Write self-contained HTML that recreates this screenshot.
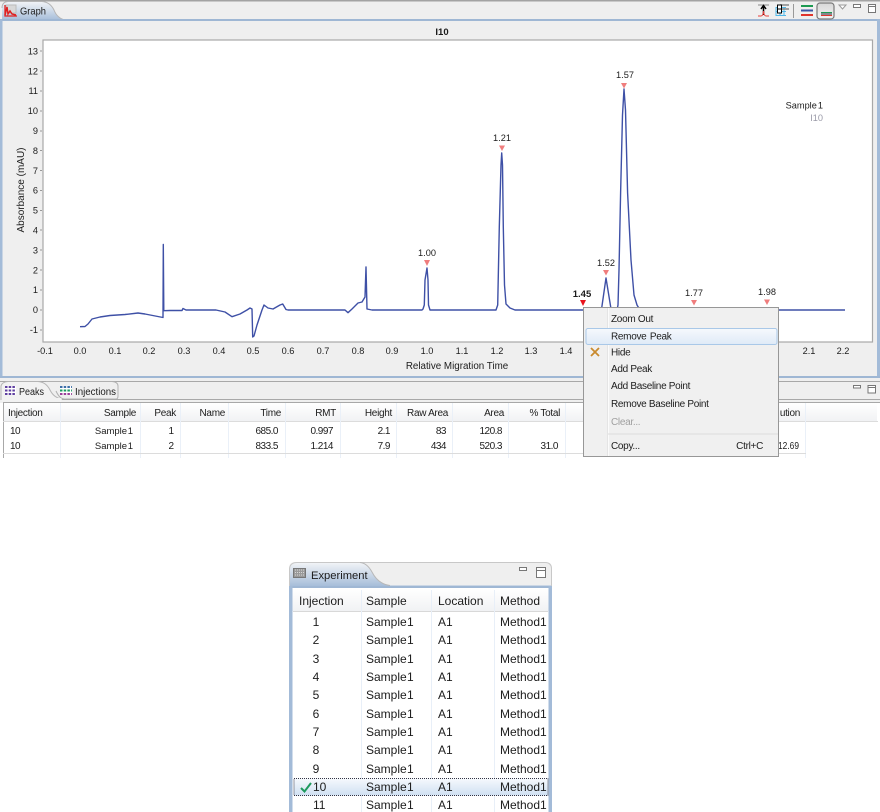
<!DOCTYPE html>
<html><head><meta charset="utf-8"><style>
html,body{margin:0;padding:0;background:#fff;width:880px;height:812px;overflow:hidden}
svg{display:block}
text{font-family:"Liberation Sans",sans-serif;font-size:10px;fill:#1c1c1c}
.e{text-anchor:end}.m{text-anchor:middle}
.t text{font-size:12px}
.p text{font-size:9.200px}
.n{letter-spacing:-.5px}
.s{font-size:9.500px;word-spacing:-2px}
.u text{letter-spacing:-.3px}
.t .w{word-spacing:-3px}
</style></head><body>
<svg width="880" height="812" viewBox="0 0 880 812" xmlns="http://www.w3.org/2000/svg">
<defs>
<linearGradient id="tab" x1="0" y1="0" x2="0" y2="1"><stop offset="0" stop-color="#f2f4f7"/><stop offset="1" stop-color="#a3bbd8"/></linearGradient>
<linearGradient id="hd" x1="0" y1="0" x2="0" y2="1"><stop offset="0" stop-color="#fff"/><stop offset="1" stop-color="#f1f2f4"/></linearGradient>
<linearGradient id="sel" x1="0" y1="0" x2="0" y2="1"><stop offset="0" stop-color="#f6f9fd"/><stop offset="1" stop-color="#cfe0f2"/></linearGradient>
<linearGradient id="hl" x1="0" y1="0" x2="0" y2="1"><stop offset="0" stop-color="#f6f9fd"/><stop offset="1" stop-color="#dfeaf7"/></linearGradient>
<linearGradient id="btn" x1="0" y1="0" x2="0" y2="1"><stop offset="0" stop-color="#d8d8d8"/><stop offset="1" stop-color="#f3f3f3"/></linearGradient>
</defs>

<!-- Graph panel -->
<rect x="0" y="0" width="880" height="378" fill="#efefef"/>
<rect x="0" y="0" width="880" height="1.500" fill="#a3a3a3"/>
<path d="M2 21V6Q2 2 8 1.500H42Q50 2 54 10Q57 18 65 20V21Z" fill="url(#tab)"/>
<path d="M2 8Q2 2 8 1.500H42Q50 2 54 10Q57 18 65 20" fill="none" stroke="#b5b5b5"/>
<rect x="0" y="19" width="880" height="2" fill="#9fb7d4"/>
<rect x="0" y="19" width="2.500" height="359" fill="#a3bbd8"/>
<rect x="877" y="19" width="3" height="359" fill="#a3bbd8"/>
<rect x="0" y="376" width="880" height="2" fill="#9fb7d4"/>
<text x="20" y="14.500" style="font-size:10.500px" textLength="26" lengthAdjust="spacingAndGlyphs">Graph</text>
<g fill="none">
<rect x="6" y="5" width="10" height="8" fill="#d8d8d8" stroke="#bbb"/>
<path d="M5 5V16H17" stroke="#e02020" stroke-width="1.300"/>
<path d="M5 15L7 7L8 14L10 11L12 14L16 15" stroke="#e02020" stroke-width="1.500"/>
</g>

<!-- toolbar -->
<path d="M758 5H769" stroke="#888"/>
<path d="M763.500 15V7M761 9L763.500 5.500L766 9" stroke="#000" stroke-width="1.500" fill="none"/>
<path d="M758 16H761Q763 16 763.500 11Q764 16 766 16H769" stroke="#e8403c" fill="none"/>
<g fill="none" stroke="#4fb8e8" stroke-width="1"><path d="M776 7.500H786M776 11.500H786M776 15.500H786M776 7V16M780 7V16M784 7V16"/></g>
<path d="M780 5H789M780 9H789" stroke="#888" stroke-width="1.500"/>
<rect x="777.500" y="5" width="4" height="8" fill="#fff" stroke="#000"/><path d="M777.500 9H781.500" stroke="#000"/>
<path d="M793.500 4V18" stroke="#999"/>
<rect x="801" y="5" width="12" height="2" fill="#1d9a52"/><rect x="801" y="9.500" width="12" height="2" fill="#3a55a5"/><rect x="801" y="14" width="12" height="2" fill="#e0342c"/>
<rect x="817" y="3" width="17" height="16" rx="3" fill="url(#btn)" stroke="#7a7a7a" stroke-width="1.200"/>
<rect x="821" y="12" width="11" height="1" fill="#1d9a52"/><rect x="821" y="13.500" width="11" height="1" fill="#223"/><rect x="821" y="15" width="11" height="1" fill="#e0342c"/>
<path d="M839 5H846L842.500 9Z" fill="#fff" stroke="#999"/>
<rect x="853.500" y="4.500" width="7" height="3" fill="#fff" stroke="#777"/>
<rect x="868.500" y="4.500" width="7" height="8" fill="#fff" stroke="#777"/><path d="M868.500 6.500H875.500" stroke="#777"/>

<!-- Plot -->
<rect x="43" y="40" width="829.500" height="302" fill="#fff" stroke="#a8a8a8" stroke-width="1.200"/>
<text x="442" y="35" class="m" style="font-weight:bold;font-size:9.500px">I10</text>
<text transform="translate(24,190) rotate(-90)" class="m">Absorbance (mAU)</text>
<text x="457" y="369" class="m" style="font-size:9.800px">Relative Migration Time</text>
<g class="e p">
<text x="38" y="54.500">13</text><text x="38" y="74.300">12</text><text x="38" y="94.200">11</text><text x="38" y="114.100">10</text><text x="38" y="134">9</text><text x="38" y="153.900">8</text><text x="38" y="173.800">7</text><text x="38" y="193.700">6</text><text x="38" y="213.600">5</text><text x="38" y="233.500">4</text><text x="38" y="253.400">3</text><text x="38" y="273.300">2</text><text x="38" y="293.200">1</text><text x="38" y="313.100">0</text><text x="38" y="333">-1</text>
</g>
<path d="M40 51H42M40 71H42M40 91H42M40 111H42M40 131H42M40 150.500H42M40 170.500H42M40 190.500H42M40 210.500H42M40 230H42M40 250H42M40 270H42M40 290H42M40 310H42M40 330H42" stroke="#999"/>
<g class="m p">
<text x="45" y="354">-0.1</text><text x="80" y="354">0.0</text><text x="115" y="354">0.1</text><text x="149" y="354">0.2</text><text x="184" y="354">0.3</text><text x="219" y="354">0.4</text><text x="253" y="354">0.5</text><text x="288" y="354">0.6</text><text x="323" y="354">0.7</text><text x="358" y="354">0.8</text><text x="392" y="354">0.9</text><text x="427" y="354">1.0</text><text x="462" y="354">1.1</text><text x="497" y="354">1.2</text><text x="531" y="354">1.3</text><text x="566" y="354">1.4</text><text x="809" y="354">2.1</text><text x="843" y="354">2.2</text>
</g>

<path d="M80 326.700L85 326.500L88 324L92 319L100 317L110 315.500L125 314.500L138 313L145 314L163 317.500L163.300 244.500L163.800 310.700L170 310.500L182 310.500L183 308.500L186 310L216 310L225 312L232 316.700L240 314L247 310L250 308L252 309L252.700 337L254 336L257 325L262 310L264 305L268 308L273 309L280 305L282.700 304L286 309.500L288 310L345 310L348 312.700L352 309L358 303L362 302L365 297L366 267L367 309L372 310L422 310L423 309L424.300 305L425 280L426 274L427 268L428 280L428.500 305L430 310L496 310L497.700 305L499.300 227L501 165L501.700 153L502.500 165L503.300 227L504.500 285L506 304L510 308L515 310L600 310L601.700 308L606 278L610.700 307L611 310L617 310L618 305L619 270L620.600 193L622.500 115L624 89L625.500 110L627.600 193L631 260L634 295L637 305L640 310L845 310" fill="none" stroke="#3e50a6" stroke-width="1.400" stroke-linejoin="round"/>

<g fill="#ef7d7d">
<path d="M424 260H430L427 266Z"/><path d="M499 145.500H505L502 151Z"/><path d="M621 83H627L624 88.500Z"/><path d="M603 270H609L606 275.500Z"/><path d="M691 300H697L694 305.500Z"/><path d="M764 299.500H770L767 305Z"/>
</g>
<path d="M580 300H586L583 306Z" fill="#e8141e"/>
<g class="m p">
<text x="427" y="256">1.00</text><text x="502" y="141">1.21</text><text x="625" y="78">1.57</text><text x="606" y="266">1.52</text><text x="582" y="297" style="font-weight:bold;font-size:9.500px">1.45</text><text x="694" y="296">1.77</text><text x="767" y="295">1.98</text>
</g>
<text x="823" y="108.500" class="e" style="font-size:9.200px;word-spacing:-1.500px">Sample 1</text>
<text x="823" y="121" class="e" style="fill:#9a9aa8;font-size:9.200px">I10</text>

<!-- Peaks panel -->
<rect x="0" y="378" width="880" height="25" fill="#efefef"/>
<rect x="0" y="381" width="880" height="1" fill="#a8a8a8"/>
<path d="M56 391Q60 400 66 399H116Q118 399 118 396V386Q118 382 112 381.500H46" fill="#efefef" stroke="#b0b0b0"/>
<path d="M1 400V386Q2 382 8 381.500H38Q46 382 50 390Q54 398 62 399" fill="#f2f2f2" stroke="#b5b5b5"/>
<rect x="1.500" y="398" width="60" height="4" fill="#f2f2f2"/>
<path d="M62 399.500H880" stroke="#a8a8a8"/>
<g><rect x="5" y="386" width="11" height="9" fill="#fff"/><path d="M5 387H16M5 390.500H16M5 394H16" stroke="#5f3fa0" stroke-width="2" stroke-dasharray="2.500 1.200"/></g>
<g><rect x="60" y="386" width="12" height="9" fill="#fff"/><path d="M60 387H72" stroke="#3d6ea8" stroke-width="2" stroke-dasharray="2.500 1.200"/><path d="M60 390.500H72" stroke="#1a9a60" stroke-width="2" stroke-dasharray="2.500 1.200"/><path d="M60 394H72" stroke="#9a3f9a" stroke-width="2" stroke-dasharray="2.500 1.200"/></g>
<text x="19" y="395" textLength="25" lengthAdjust="spacingAndGlyphs">Peaks</text>
<text x="75" y="395" textLength="41" lengthAdjust="spacingAndGlyphs">Injections</text>
<rect x="853.500" y="385.500" width="7" height="2.500" fill="#fff" stroke="#777"/>
<rect x="868" y="385.500" width="7.500" height="7.500" fill="#fff" stroke="#777"/><path d="M868 387.500H875.500" stroke="#777"/>

<rect x="3" y="402" width="877" height="56" fill="#fff"/>
<rect x="3" y="403" width="874" height="18" fill="url(#hd)"/>
<path d="M3 402.500H880M3.500 402V458" stroke="#a8a8a8"/>
<path d="M3 421.500H878" stroke="#dcdcdc"/>
<path d="M60.500 403V458M140.500 403V458M180.500 403V458M228.500 403V458M285.500 403V458M340.500 403V458M396.500 403V458M452.500 403V458M508.500 403V458M565.500 403V458M805.500 403V458" stroke="#eaf0f8"/>
<path d="M3 453.500H806" stroke="#dcdcdc"/>
<g class="u">
<text x="8" y="416">Injection</text><text x="136" y="416" class="e">Sample</text><text x="176" y="416" class="e">Peak</text><text x="225" y="416" class="e">Name</text><text x="281" y="416" class="e">Time</text><text x="336" y="416" class="e">RMT</text><text x="392" y="416" class="e">Height</text><text x="448" y="416" class="e">Raw Area</text><text x="504" y="416" class="e">Area</text><text x="560" y="416" class="e">% Total</text><text x="800" y="416" class="e">ution</text>
</g>
<text x="10" y="434" class="n">10</text><text x="133" y="434" class="e s">Sample 1</text><text x="174" y="434" class="e">1</text><text x="278" y="434" class="e n">685.0</text><text x="333" y="434" class="e n">0.997</text><text x="390" y="434" class="e n">2.1</text><text x="446" y="434" class="e n">83</text><text x="502" y="434" class="e n">120.8</text>
<text x="10" y="449" class="n">10</text><text x="133" y="449" class="e s">Sample 1</text><text x="174" y="449" class="e">2</text><text x="278" y="449" class="e n">833.5</text><text x="333" y="449" class="e n">1.214</text><text x="390" y="449" class="e n">7.9</text><text x="446" y="449" class="e n">434</text><text x="502" y="449" class="e n">520.3</text><text x="558" y="449" class="e n">31.0</text><text x="778" y="449" textLength="21" lengthAdjust="spacingAndGlyphs">12.69</text>

<!-- Context menu -->
<rect x="583.500" y="307.500" width="195" height="149" fill="#f0f0f0" stroke="#979797"/>
<path d="M607.500 308V456" stroke="#e4e4e4"/><path d="M608.500 308V456" stroke="#fbfbfb"/>
<rect x="586" y="328.500" width="191" height="16" rx="2" fill="url(#hl)" stroke="#a9c8e8"/>
<g class="u">
<text x="611" y="322">Zoom Out</text>
<text x="611" y="339.500" style="word-spacing:1px">Remove Peak</text>
<text x="611" y="355.500">Hide</text>
<text x="611" y="372">Add Peak</text>
<text x="611" y="389">Add Baseline Point</text>
<text x="611" y="407">Remove Baseline Point</text>
<text x="611" y="425" style="fill:#a0a0a0">Clear...</text>
<text x="611" y="449">Copy...</text>
<text x="763" y="449" class="e">Ctrl+C</text>
</g>
<path d="M608 434H778" stroke="#dcdcdc"/>
<path d="M591 348L599 356M599 348L591 356" stroke="#c98a2e" stroke-width="1.800"/>

<!-- Experiment panel -->
<path d="M289 812V568Q289 562 296 562H545Q552 562 552 568V812Z" fill="#efefef"/>
<path d="M289.500 586V570Q290 563 297 562.500H360Q367 563 372 572Q378 584 390 585.500H552V587H289.500Z" fill="url(#tab)"/>
<path d="M289.500 590V569Q290 562.500 297 562.500H545Q551.500 562.500 551.500 569V590" fill="none" stroke="#c8c8c8"/>
<path d="M360 562.500Q367 563 372 572Q378 584 390 585.500" fill="none" stroke="#b8b8b8"/>
<rect x="289" y="586" width="263" height="2" fill="#9fb7d4"/>
<rect x="289" y="586" width="3.500" height="226" fill="#a3bbd8"/>
<rect x="548.500" y="586" width="3.500" height="226" fill="#a3bbd8"/>
<rect x="292.500" y="588" width="256" height="224" fill="#fff"/>
<rect x="292.500" y="589" width="256" height="22" fill="url(#hd)"/>
<path d="M293 611.500H548" stroke="#d8d8d8"/>
<path d="M361.500 590V812M431.500 590V812M494.500 590V812" stroke="#e8eff8"/>
<rect x="293" y="568" width="13" height="10" fill="#9a9a9a"/>
<path d="M295 570H304M295 572.500H304M295 575H304" stroke="#d8d8d8" stroke-dasharray="1 1"/>
<rect x="293.500" y="568.500" width="12" height="9" fill="none" stroke="#777"/>
<text x="311" y="579" style="font-size:11.200px">Experiment</text>
<rect x="519.500" y="567.500" width="7" height="3" fill="#fff" stroke="#777"/>
<rect x="536.500" y="567.500" width="9" height="10" fill="#fff" stroke="#777"/><path d="M536.500 570.500H545.500" stroke="#777"/>
<g class="t">
<text x="299" y="605">Injection</text><text x="366" y="605">Sample</text><text x="438" y="605">Location</text><text x="500" y="605">Method</text>
<rect x="294" y="778.500" width="254" height="17" fill="url(#sel)" stroke="#334" stroke-width="1" stroke-dasharray="1 1"/>
<path d="M301 788L304.500 791.500L311 783" fill="none" stroke="#1e9a5e" stroke-width="2"/>
<text x="316" y="626" class="m">1</text><text x="366" y="626" class="w">Sample 1</text><text x="438" y="626">A1</text><text x="500" y="626">Method1</text>
<text x="316" y="644" class="m">2</text><text x="366" y="644" class="w">Sample 1</text><text x="438" y="644">A1</text><text x="500" y="644">Method1</text>
<text x="316" y="663" class="m">3</text><text x="366" y="663" class="w">Sample 1</text><text x="438" y="663">A1</text><text x="500" y="663">Method1</text>
<text x="316" y="681" class="m">4</text><text x="366" y="681" class="w">Sample 1</text><text x="438" y="681">A1</text><text x="500" y="681">Method1</text>
<text x="316" y="699" class="m">5</text><text x="366" y="699" class="w">Sample 1</text><text x="438" y="699">A1</text><text x="500" y="699">Method1</text>
<text x="316" y="718" class="m">6</text><text x="366" y="718" class="w">Sample 1</text><text x="438" y="718">A1</text><text x="500" y="718">Method1</text>
<text x="316" y="736" class="m">7</text><text x="366" y="736" class="w">Sample 1</text><text x="438" y="736">A1</text><text x="500" y="736">Method1</text>
<text x="316" y="754" class="m">8</text><text x="366" y="754" class="w">Sample 1</text><text x="438" y="754">A1</text><text x="500" y="754">Method1</text>
<text x="316" y="773" class="m">9</text><text x="366" y="773" class="w">Sample 1</text><text x="438" y="773">A1</text><text x="500" y="773">Method1</text>
<text x="313" y="791">10</text><text x="366" y="791" class="w">Sample 1</text><text x="438" y="791">A1</text><text x="500" y="791">Method1</text>
<text x="313" y="809">11</text><text x="366" y="809" class="w">Sample 1</text><text x="438" y="809">A1</text><text x="500" y="809">Method1</text>
</g>
</svg>
</body></html>
